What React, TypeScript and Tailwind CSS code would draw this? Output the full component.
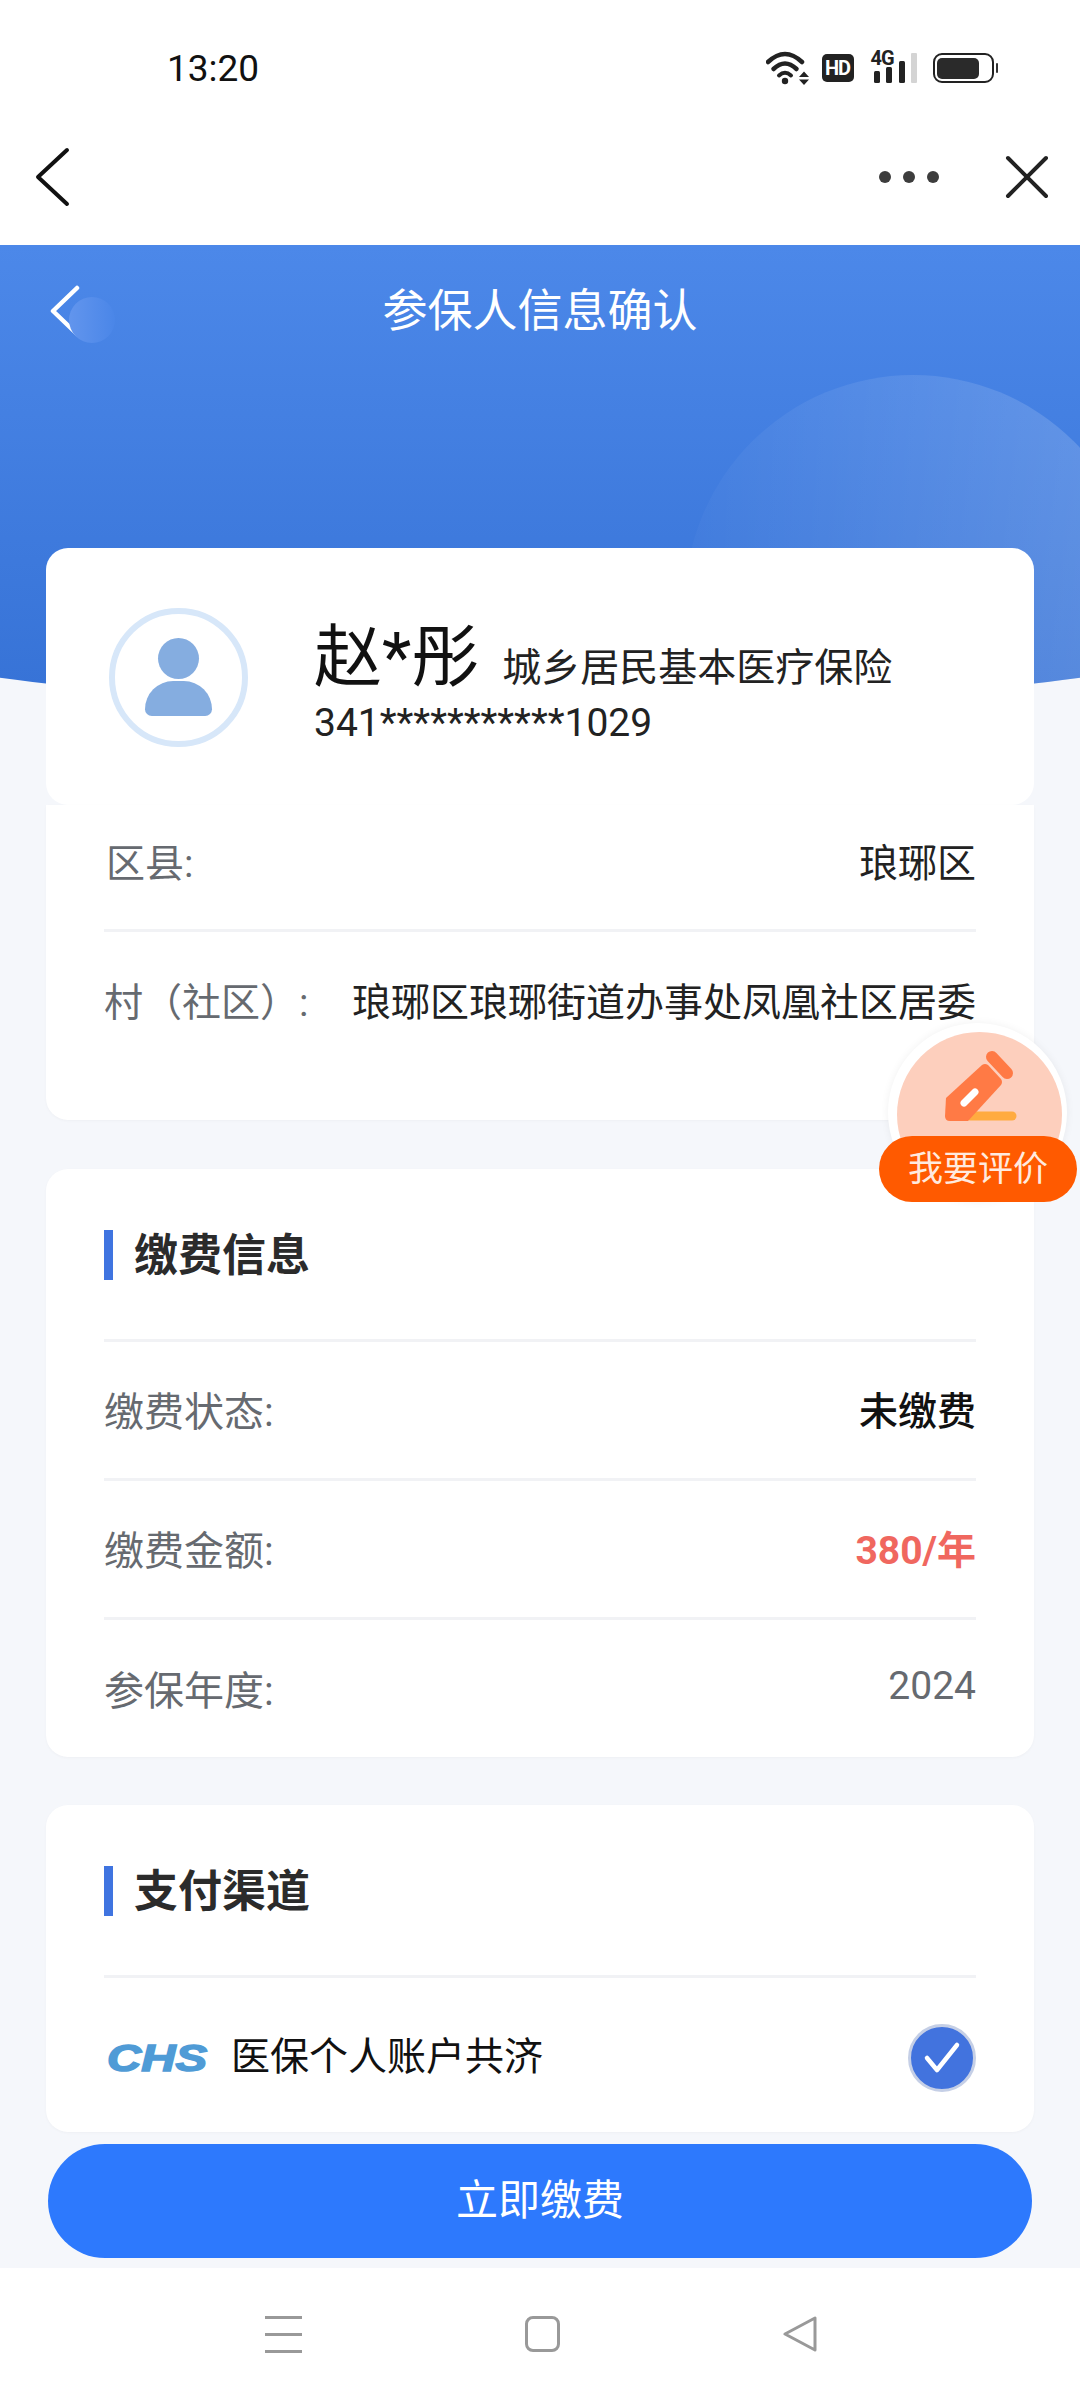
import * as React from "react"

const font = { fontFamily: '"Roboto", "Noto Sans CJK SC", sans-serif' }

function StatusIcons() {
  return (
    <div className="flex items-center">
      {/* wifi */}
      <svg className="w-[44px] h-[36px]" viewBox="765 50 44 36" fill="none">
        <path d="M767 62 Q784 46 801 62" stroke="#222" strokeWidth="4.5" strokeLinecap="round" />
        <path d="M772.5 69 Q784 58 795.5 69" stroke="#222" strokeWidth="4.5" strokeLinecap="round" />
        <path d="M778 75.5 Q784 70 790 75.5" stroke="#222" strokeWidth="4" strokeLinecap="round" />
        <circle cx="784" cy="81" r="3.2" fill="#222" />
        <path d="M798 77 L803 71.5 L808 77 Z M798 79.5 L808 79.5 L803 85 Z" fill="#222" />
      </svg>
      <div className="ml-[12px] w-[32px] h-[28px] rounded-[5px] bg-[#222] flex items-center justify-center text-white text-[20px] leading-none font-bold tracking-[-1px]">
        HD
      </div>
      {/* signal */}
      <div className="ml-[17px] relative w-[46px] h-[34px]">
        <svg className="w-full h-full" viewBox="870 52 46 34" fill="none">
          <rect x="873" y="72" width="6" height="12" rx="1.5" fill="#222" />
          <rect x="885" y="68" width="6" height="16" rx="1.5" fill="#222" />
          <rect x="898" y="62" width="6" height="22" rx="1.5" fill="#222" />
          <rect x="910" y="54" width="6" height="30" rx="1" fill="#d4d4d4" />
        </svg>
        <span className="absolute left-0 top-[-3px] text-[20px] leading-[20px] font-bold text-[#222] tracking-[-1px]">
          4G
        </span>
      </div>
      {/* battery */}
      <div className="ml-[16px] flex items-center">
        <div className="w-[61px] h-[30px] rounded-[9px] border-[2.5px] border-[#222] p-[2.5px] flex">
          <div className="w-[42px] h-full rounded-[5px] bg-[#2a2a2a]" />
        </div>
        <div className="ml-[2px] w-[2.5px] h-[10px] rounded-full bg-[#333]" />
      </div>
    </div>
  )
}

function SectionTitle({ title }: { title: string }) {
  return (
    <div className="flex items-center h-[173px] border-b-[3px] border-[#f1f2f5] pt-[2px]">
      <div className="w-[9px] h-[50px] bg-[#3f74e0]" />
      <span className="ml-[21px] mt-[2px] text-[44px] font-bold text-[#2b2b2b] leading-none">{title}</span>
    </div>
  )
}

function InfoRow({ label, children, last }: { label: string; children: React.ReactNode; last?: boolean }) {
  return (
    <div className={"flex items-center justify-between h-[139px] pt-[5px] " + (last ? "" : "border-b-[3px] border-[#f1f2f5]")}>
      <span className="text-[40px] text-[#666a70] leading-none">{label}</span>
      {children}
    </div>
  )
}

function EvalBadge() {
  return (
    <div className="absolute left-[879px] top-[1023px] w-[198px] h-[179px] z-20">
      <div className="absolute left-[9px] top-0 w-[179px] h-[179px] rounded-full bg-white pl-[9px] pr-[5px] pt-[9px] pb-[5px] shadow-[0_0_8px_rgba(0,0,0,0.06)]">
        <div className="w-full h-full rounded-full bg-[#fdcfbd]">
          <svg className="w-full h-full" viewBox="897 1032 165 165" fill="none">
            <path d="M970 1116 L1012 1116" stroke="#ffab40" strokeWidth="9" strokeLinecap="round" />
            <path
              d="M946 1098 L982 1065 Q985 1063 988 1065 L1001 1079 Q1003 1082 1001 1085 L968 1121 L950 1121 Q945 1121 945 1116 Z"
              fill="#ff7a45"
            />
            <path d="M992 1057 L1007 1073" stroke="#ff7a45" strokeWidth="12" strokeLinecap="round" />
            <path d="M964 1103 L975 1092" stroke="#fff" strokeWidth="7" strokeLinecap="round" />
          </svg>
        </div>
      </div>
      <div className="absolute left-0 top-[113px] w-[198px] h-[66px] rounded-full bg-[#ff5a00] flex items-center justify-center text-[35px] text-[#ffeadf] leading-none">
        我要评价
      </div>
    </div>
  )
}

export default function App() {
  return (
    <div className="relative w-[1080px] h-[2400px] overflow-hidden bg-[#f5f7fb] flex flex-col" style={font}>
      {/* status bar */}
      <div className="h-[122px] bg-white flex items-start justify-between pt-[50px] pl-[167px] pr-[82px]">
        <span className="text-[37px] leading-[38px] text-[#111]">13:20</span>
        <StatusIcons />
      </div>

      {/* nav */}
      <div className="h-[123px] bg-white flex items-center justify-between pl-[34px] pr-[31px] pb-[13px]">
        <svg className="w-[38px] h-[60px]" viewBox="0 0 38 60" fill="none">
          <path d="M33 3 L4 30 L33 57" stroke="#111" strokeWidth="4" strokeLinecap="round" strokeLinejoin="round" />
        </svg>
        <div className="flex items-center gap-[66px]">
          <div className="flex gap-[12px]">
            <div className="w-[12px] h-[12px] rounded-full bg-[#3d3d3d]" />
            <div className="w-[12px] h-[12px] rounded-full bg-[#3d3d3d]" />
            <div className="w-[12px] h-[12px] rounded-full bg-[#3d3d3d]" />
          </div>
          <svg className="w-[44px] h-[44px]" viewBox="0 0 44 44" fill="none">
            <path d="M3 3 L41 41 M41 3 L3 41" stroke="#222" strokeWidth="4" strokeLinecap="round" />
          </svg>
        </div>
      </div>

      {/* blue header */}
      <div className="relative h-[485px] overflow-hidden">
        <div className="absolute left-[-260px] top-0 w-[1600px] h-[463px] rounded-b-[800px_115px] overflow-hidden bg-gradient-to-b from-[#4c88e9] to-[#3672d6]">
          <div className="absolute left-[945px] top-[130px] w-[456px] h-[456px] rounded-full bg-gradient-to-r from-[#ffffff05] to-[#ffffff2e]" />
        </div>
        <div className="relative h-[132px] flex items-center justify-center">
          <span className="text-[45px] text-white leading-none">参保人信息确认</span>
          <svg className="absolute left-[49px] top-[40px] w-[32px] h-[52px]" viewBox="0 0 32 52" fill="none">
            <path d="M28 3 L4 26 L28 49" stroke="#fff" strokeWidth="4.5" strokeLinecap="round" strokeLinejoin="round" />
          </svg>
          <div className="absolute left-[69px] top-[52px] w-[46px] h-[46px] rounded-full bg-gradient-to-r from-[#6295ed] to-[#4a86e8]" />
        </div>
      </div>

      {/* cards */}
      <div className="relative -mt-[182px] px-[46px] flex flex-col">
        <div className="h-[257px] rounded-[22px] bg-white flex items-start pt-[60px] pl-[63px]">
          <div className="w-[139px] h-[139px] rounded-full border-[6px] border-[#d7e7f9] flex flex-col items-center pt-[24px]">
            <div className="w-[41px] h-[41px] rounded-full bg-[#85ade0]" />
            <div className="mt-[2px] w-[67px] h-[35px] rounded-t-[33px] rounded-b-[8px] bg-[#85ade0]" />
          </div>
          <div className="ml-[66px] flex flex-col pt-[12px]">
            <div className="flex items-baseline h-[76px]">
              <span className="text-[68px] leading-[76px] text-[#111]">赵*彤</span>
              <span className="ml-[23px] text-[39px] leading-none text-[#222]">城乡居民基本医疗保险</span>
            </div>
            <span className="mt-[4px] text-[39px] leading-[46px] text-[#222]">341***********1029</span>
          </div>
        </div>

        <div className="h-[315px] rounded-b-[22px] bg-white px-[58px] shadow-[0_1px_3px_rgba(0,0,0,0.03)]">
          <div className="h-[127px] flex items-start justify-between border-b-[3px] border-[#f1f2f5] pt-[38px]">
            <span className="text-[39px] leading-[42px] text-[#666a70] pl-[2px]">区县:</span>
            <span className="text-[39px] leading-[42px] text-[#222]">琅琊区</span>
          </div>
          <div className="flex justify-between pt-[50px]">
            <span className="text-[39px] leading-[42px] text-[#666a70]">村（社区）:</span>
            <span className="text-[39px] leading-[42px] text-[#222]">琅琊区琅琊街道办事处凤凰社区居委</span>
          </div>
        </div>

        <div className="mt-[49px] h-[588px] rounded-[22px] bg-white px-[58px] shadow-[0_1px_3px_rgba(0,0,0,0.03)]">
          <SectionTitle title="缴费信息" />
          <InfoRow label="缴费状态:">
            <span className="text-[39px] leading-none font-medium text-[#111]">未缴费</span>
          </InfoRow>
          <InfoRow label="缴费金额:">
            <span className="text-[39px] leading-none font-bold text-[#f0675f]">380/年</span>
          </InfoRow>
          <InfoRow label="参保年度:" last>
            <span className="text-[39px] leading-none text-[#666a70] -mt-[12px]">2024</span>
          </InfoRow>
        </div>

        <div className="mt-[48px] h-[327px] rounded-[22px] bg-white px-[58px] shadow-[0_1px_3px_rgba(0,0,0,0.03)]">
          <SectionTitle title="支付渠道" />
          <div className="flex items-center h-[154px] pt-[5px]">
            <svg className="w-[112px] h-[44px] shrink-0" viewBox="0 0 112 44">
              <text
                x="3"
                y="35"
                fontFamily="Liberation Sans"
                fontWeight="700"
                fontStyle="italic"
                fontSize="36"
                textLength="100"
                lengthAdjust="spacingAndGlyphs"
                fill="#4f9bd6"
                stroke="#4f9bd6"
                strokeWidth="1.5"
              >
                CHS
              </text>
            </svg>
            <span className="ml-[15px] text-[39px] leading-none text-[#111]">医保个人账户共济</span>
            <div className="ml-auto w-[68px] h-[68px] rounded-full bg-[#4273de] border-[3px] border-[#c5cfe6] flex items-center justify-center">
              <svg className="w-[40px] h-[34px]" viewBox="0 0 40 34" fill="none">
                <path d="M5 17 L15 29 L35 4" stroke="#fff" strokeWidth="4.5" strokeLinecap="round" strokeLinejoin="round" />
              </svg>
            </div>
          </div>
        </div>

        <div className="mt-[12px] mx-[2px] h-[114px] rounded-full bg-[#2d79fd] flex items-center justify-center text-[42px] text-white leading-none">
          立即缴费
        </div>
      </div>

      {/* system nav */}
      <div className="mt-[10px] flex-1 bg-white flex items-start pt-[48px] pl-[265px]">
        <div className="w-[37px] h-[37px] flex flex-col justify-between">
          <div className="h-[3px] bg-[#999]" />
          <div className="h-[3px] bg-[#999]" />
          <div className="h-[3px] bg-[#999]" />
        </div>
        <div className="ml-[223px] w-[35px] h-[36px] rounded-[8px] border-[3px] border-[#999]" />
        <svg className="ml-[222px] w-[36px] h-[36px]" viewBox="0 0 36 36" fill="none">
          <path d="M33 2 L33 34 L3 18 Z" stroke="#999" strokeWidth="3" strokeLinejoin="round" />
        </svg>
      </div>

      <EvalBadge />
    </div>
  )
}
